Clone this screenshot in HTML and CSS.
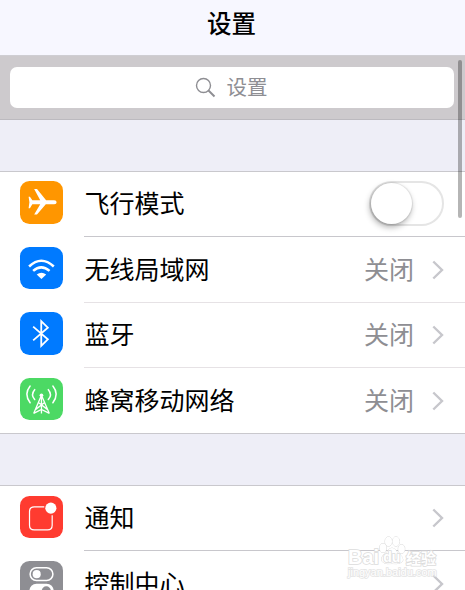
FILE: index.html
```html
<!doctype html>
<html lang="zh-CN">
<head>
<meta charset="utf-8">
<meta name="viewport" content="width=device-width, initial-scale=1.0">
<link rel="stylesheet" href="styles.css">
<title>设置</title>
</head>
<body>
<h1 class="navbar">设置</h1>

<div class="search">
  <div class="search-field">
    <svg width="21" height="21" viewBox="0 0 21 21"><circle cx="8.5" cy="8.5" r="7" /><path d="M13.5 13.5l6 6" stroke-width="2" /></svg>
    <span>设置</span>
  </div>
</div>

<ul class="group">
  <li class="row">
    <svg class="icon orange" viewBox="0 0 42 42"><path fill="#fff" d="M8.5 15.500h1.300l2.400 3.500H20L14 8h2.800l9 11h8q2.400.2 2.400 2t-2.400 2h-8.300L16.800 33H14l6-10H12.200L9.800 27H8.500l.8-6z" /></svg>
    <div class="cell">
      <span class="label">飞行模式</span>
      <span class="switch"></span>
    </div>
  </li>
  <li class="row light">
    <svg class="icon blue" viewBox="0 0 42 42"><g fill="none" stroke="#fff" stroke-width="2.500"><path d="M9 19.300q12-11.500 24.400 0" /><path d="M13 23.600q7.900-7 16.200 0" /></g><path fill="#fff" d="M16.500 27.200q4.700-3.500 9.400 0l-4.700 4.500z" /></svg>
    <div class="cell">
      <span class="label">无线局域网</span>
      <span class="value">关闭</span>
      <svg class="chevron" viewBox="0 0 12 20"><path d="M1.300 1.500L10 10l-8.700 8.500" /></svg>
    </div>
  </li>
  <li class="row light">
    <svg class="icon blue" viewBox="0 0 42 42"><path fill="none" stroke="#fff" stroke-width="1.800" d="M13 14.500L27.500 27 21 33.500V9l6.500 6.500L13 28" /></svg>
    <div class="cell">
      <span class="label">蓝牙</span>
      <span class="value">关闭</span>
      <svg class="chevron" viewBox="0 0 12 20"><path d="M1.300 1.500L10 10l-8.700 8.500" /></svg>
    </div>
  </li>
  <li class="row">
    <svg class="icon green" viewBox="0 0 42 42">
      <g fill="none" stroke="#fff" stroke-width="1.500" stroke-linecap="round"><path d="M10 8q-6.500 8 0 16.500M32.500 8q6.500 8 0 16.500" /><path d="M14.500 11.500q-4.200 4.800 0 9.800M28 11.500q4.200 4.800 0 9.800" /></g>
      <g fill="none" stroke="#fff" stroke-width="1.300"><path d="M21.200 17L13.500 35M21.200 17L29 35M21.200 17v18M18.500 24.500l8.500 6.500M24 24.500L15.500 31M13.500 35l7.700-4 7.800 4" /></g>
      <circle cx="21.200" cy="17" r="1.800" fill="#fff" />
    </svg>
    <div class="cell">
      <span class="label">蜂窝移动网络</span>
      <span class="value">关闭</span>
      <svg class="chevron" viewBox="0 0 12 20"><path d="M1.300 1.500L10 10l-8.700 8.500" /></svg>
    </div>
  </li>
</ul>

<ul class="group">
  <li class="row">
    <svg class="icon red" viewBox="0 0 42 42"><path fill="none" stroke="#fff" stroke-width="1.200" d="M24 10.800H14q-4.600 0-4.600 4.600v13.400q0 4.600 4.600 4.600h13.200q4.600 0 4.600-4.600V19" /><circle cx="30.500" cy="12" r="5.500" fill="#fff" /></svg>
    <div class="cell">
      <span class="label">通知</span>
      <svg class="chevron" viewBox="0 0 12 20"><path d="M1.300 1.500L10 10l-8.700 8.500" /></svg>
    </div>
  </li>
  <li class="row">
    <svg class="icon gray" viewBox="0 0 42 42"><rect x="10" y="6.700" width="22.500" height="12.500" rx="6.200" fill="none" stroke="#fff" stroke-width="1.500" /><circle cx="16.500" cy="13" r="4" fill="#fff" /><rect x="9.300" y="22.500" width="24" height="14" rx="7" fill="#fff" /><circle cx="26" cy="29.500" r="4.500" fill="#8e8e93" /></svg>
    <div class="cell">
      <span class="label">控制中心</span>
      <svg class="chevron" viewBox="0 0 12 20"><path d="M1.300 1.500L10 10l-8.700 8.500" /></svg>
    </div>
  </li>
</ul>

<div class="scrollbar"></div>

<div class="watermark">
  <svg class="paw" viewBox="0 0 28 29"><ellipse cx="5" cy="12" rx="3.300" ry="4.500" /><ellipse cx="10.500" cy="5.500" rx="3.500" ry="4.700" /><ellipse cx="18" cy="5.500" rx="3.500" ry="4.700" /><ellipse cx="23.500" cy="13" rx="3.300" ry="4.300" /><path d="M14 12q-3 0-5 4-6 4-5.500 8 1 4.500 10.500 3.500 10 1 11-3.500 0-4-6-8-2-4-5-4z" /></svg>
  <div class="brand"><span>Bai</span><span class="du">du</span><span class="jingyan">经验</span></div>
  <div class="domain">jingyan.baidu.com</div>
</div>
</body>
</html>
```
FILE: styles.css
```css
* {
    box-sizing: border-box;
}
body {
    position: relative;
    height: 590px;
    margin: 0;
    overflow: hidden;
    background: #eeeef7;
    color: #000;
    font-family: "Noto Sans CJK SC", sans-serif;
    font-size: 25px;
}
.navbar {
    height: 56px;
    margin: 0;
    padding: 4px 2px 0 0;
    border-bottom: 1px solid #cfced3;
    background: #f7f7ff;
    font-size: 24.5px;
    font-weight: 500;
    line-height: 38px;
    text-align: center;
}
.search {
    height: 64px;
    padding: 11px 11px 0 10px;
    border-bottom: 1px solid #bcbabf;
    background: #cdcacd;
}
.search-field {
    display: flex;
    align-items: center;
    justify-content: center;
    gap: 11px;
    height: 41px;
    padding-right: 2px;
    border-radius: 7px;
    background: #fff;
    color: #8e8e93;
    font-size: 20.5px;
    line-height: 38px;
}
.search-field span {
    padding-bottom: 3px;
}
.search-field svg {
    fill: none;
    stroke: #8e8e93;
    stroke-width: 1.4;
}
.group {
    margin: 51px 0 0;
    padding: 0;
    border-top: 1px solid #c9c8cd;
    border-bottom: 1px solid #c9c8cd;
    background: #fff;
    list-style: none;
}
.row {
    display: flex;
    gap: 21.5px;
    height: 65.4px;
    padding-left: 20px;
}
.row:last-child,
.group + .group .row {
    height: 65px;
}
.icon {
    flex: none;
    width: 42.5px;
    height: 42.5px;
    margin-top: 9.45px;
    border-radius: 9.5px;
}
.orange {
    background: #ff9600;
}
.blue {
    background: #007aff;
}
.green {
    background: #4cd964;
}
.red {
    background: #ff3b30;
}
.gray {
    background: #8e8e93;
}
.cell {
    display: flex;
    flex: 1;
    align-items: center;
    padding: 0 21px 1px .5px;
    border-bottom: 1px solid #c8c7cc;
}
.light .cell {
    border-color: #e6e2e5;
}
.row:last-child .cell {
    border-bottom: 0;
}
.label,
.value {
    padding-bottom: 3px;
    line-height: 38px;
}
.label {
    flex: 1;
}
.value {
    color: #8e8e93;
}
.chevron {
    width: 12px;
    height: 20px;
    margin: 1px 0 0 18px;
    fill: none;
    stroke: #c7c7cc;
    stroke-width: 2.4;
}
.switch {
    width: 75px;
    height: 45px;
    border: 2px solid #e5e5e5;
    border-radius: 23px;
}
.switch:before {
    content: "";
    display: block;
    width: 41px;
    height: 41px;
    border-radius: 50%;
    background: #fff;
    box-shadow: 0 0 1px 1px rgba(0, 0, 0, .08), -1px 3px 6px rgba(0, 0, 0, .32);
}
.scrollbar {
    position: absolute;
    top: 60px;
    right: 3px;
    width: 4px;
    height: 158px;
    border-radius: 2px;
    background: rgba(0, 0, 0, .29);
}
.watermark {
    position: absolute;
    top: 536px;
    left: 348px;
    width: 88px;
    color: #fff;
    font-family: "Liberation Sans", "Noto Sans CJK SC", sans-serif;
    -webkit-text-stroke: 1.6px #dcdcdc;
    paint-order: stroke fill;
}
.paw {
    position: absolute;
    top: 0;
    left: 30px;
    width: 28px;
    height: 29px;
    fill: #fff;
    stroke: #dadada;
}
.brand {
    display: flex;
    position: relative;
    align-items: center;
    height: 20px;
    margin-top: 11px;
    font-size: 20px;
    font-weight: bold;
}
.du {
    margin-left: 4px;
    font-size: 14px;
}
.jingyan {
    margin-left: auto;
    font-size: 15px;
}
.domain {
    position: relative;
    margin-top: -1px;
    font-size: 11px;
    line-height: 13px;
    -webkit-text-stroke-color: #e4e4e4;
}
```
